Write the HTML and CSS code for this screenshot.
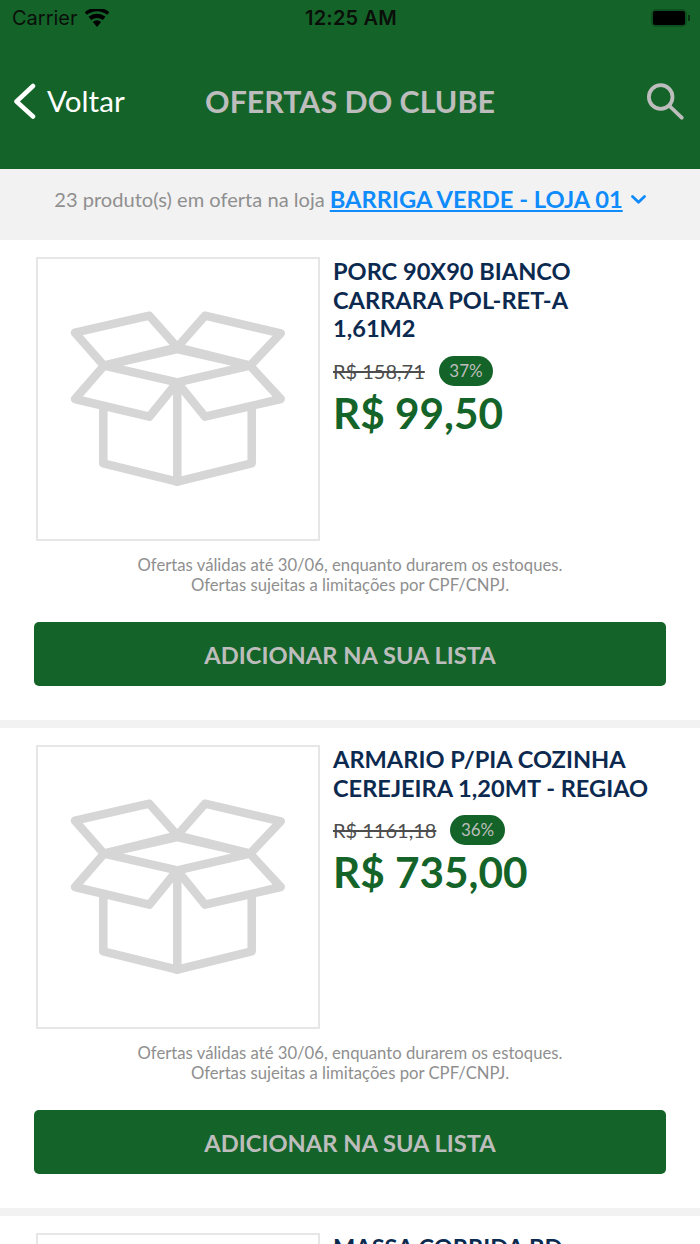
FILE: index.html
```html
<!DOCTYPE html>
<html lang="pt-br">
<head>
  <meta charset="UTF-8" />
  <title>Ofertas do Clube</title>
  <meta name="viewport" content="width=device-width, initial-scale=1" />
  <link rel="stylesheet" href="styles.css">
</head>
<body>
  <svg class="defs" width="0" height="0">
    <symbol id="caixa" viewBox="2 2 280 280">
      <g fill="none" stroke="#d6d6d6" stroke-width="8.5" stroke-linejoin="round" stroke-linecap="round">
        <path d="M39 75.7 113.3 58.7 141.3 90.3 68 108.7Z" />
        <path d="M244.7 76.3 169 58.7 141.3 90.3 214 108.7Z" />
        <path d="M68 108.7 141.3 92 214 108.7 141.3 125.3Z" />
        <path d="M68 108.7 39 142 113.3 159.7 141.3 125.3" />
        <path d="M214 108.7 244.7 142 169 159.7 141.3 125.3" />
        <path d="M67.3 150V206.3L141.3 224.7 215.7 206.3V150" />
        <path d="M141.3 125.3V224.7" />
      </g>
    </symbol>
  </svg>

  <header class="topo">
    <div class="status">
      <div class="status-esq">
        <span>Carrier</span>
        <svg class="wifi" viewBox="0 0 26 19"><path d="M13 19 8.6 13.6a7 7 0 0 1 8.8 0Z" /><path d="M6.9 11.6 4 8.2a14 14 0 0 1 18 0l-2.9 3.4a9.6 9.6 0 0 0-12.2 0Z" /><path d="M2.3 6.2 0 3.4a20.4 20.4 0 0 1 26 0l-2.3 2.8a16.8 16.8 0 0 0-21.4 0Z" /></svg>
      </div>
      <div class="hora">12:25 AM</div>
      <div class="status-dir">
        <div class="bateria"><div class="carga"></div></div>
        <div class="polo"></div>
      </div>
    </div>
    <nav class="nav">
      <a class="voltar" href="#">
        <svg class="seta" viewBox="0 0 22 36"><path d="M19 3 2.5 18.5 19 33.5" /></svg>
        <span>Voltar</span>
      </a>
      <h1>OFERTAS DO CLUBE</h1>
      <a class="busca" href="#">
        <svg viewBox="0 0 38 37"><circle cx="13.7" cy="14" r="11.8" /><path d="M22.5 23 34.7 34.7" /></svg>
      </a>
    </nav>
  </header>

  <div class="filtro">
    <span>23 produto(s) em oferta na loja</span>
    <a href="#">BARRIGA VERDE - LOJA 01</a>
    <svg class="chevron" viewBox="0 0 15 9"><path d="M1.5 1.5 7.5 7.2 13.5 1.5" /></svg>
  </div>

  <main>
    <article class="produto">
      <div class="linha">
        <div class="foto"><svg><use href="#caixa" /></svg></div>
        <div class="info">
          <h2>PORC 90X90 BIANCO CARRARA POL-RET-A 1,61M2</h2>
          <div class="de"><s>R$ 158,71</s><span class="desconto">37%</span></div>
          <div class="por">R$ 99,50</div>
        </div>
      </div>
      <p class="aviso">Ofertas válidas até 30/06, enquanto durarem os estoques.<br>Ofertas sujeitas a limitações por CPF/CNPJ.</p>
      <button type="button">ADICIONAR NA SUA LISTA</button>
    </article>

    <article class="produto">
      <div class="linha">
        <div class="foto"><svg><use href="#caixa" /></svg></div>
        <div class="info">
          <h2>ARMARIO P/PIA COZINHA CEREJEIRA 1,20MT - REGIAO</h2>
          <div class="de"><s>R$ 1161,18</s><span class="desconto">36%</span></div>
          <div class="por">R$ 735,00</div>
        </div>
      </div>
      <p class="aviso">Ofertas válidas até 30/06, enquanto durarem os estoques.<br>Ofertas sujeitas a limitações por CPF/CNPJ.</p>
      <button type="button">ADICIONAR NA SUA LISTA</button>
    </article>

    <article class="produto">
      <div class="linha">
        <div class="foto"><svg><use href="#caixa" /></svg></div>
        <div class="info">
          <h2>MASSA CORRIDA BD</h2>
        </div>
      </div>
    </article>
  </main>
</body>
</html>
```

FILE: styles.css
```css
html, body {
  height: 1244px;
  overflow: hidden;
}
body {
  margin: 0;
  font-family: 'Lato', sans-serif;
  background: white;
}
a {
  text-decoration: none;
}
.defs {
  display: block;
  height: 0;
}
.topo {
  background: #146429;
  height: 169px;
}
.status {
  display: grid;
  grid-template-columns: 1fr auto 1fr;
  align-items: center;
  height: 36px;
  padding: 0 10px 0 12px;
  font-family: 'Inter', sans-serif;
  font-size: 20px;
  color: #0a0f0a;
}
.status-esq {
  display: flex;
  align-items: center;
  gap: 6px;
}
.wifi {
  width: 26px;
  height: 18px;
  fill: #000;
  margin-top: -1px;
}
.status-dir {
  display: flex;
  justify-content: flex-end;
  align-items: center;
  gap: 1px;
}
.hora {
  font-weight: 600;
  letter-spacing: 0.2px;
}
.bateria {
  width: 36px;
  height: 18px;
  border: 2px solid #0e4f20;
  border-radius: 5px;
  box-sizing: border-box;
}
.carga {
  height: 100%;
  background: #000;
  border-radius: 2px;
}
.polo {
  width: 2px;
  height: 6px;
  background: #0b3316;
}
.nav {
  display: grid;
  grid-template-columns: 1fr auto 1fr;
  align-items: center;
  height: 66px;
  margin-top: 32px;
  padding: 0 14px;
}
.nav h1 {
  margin: 0;
  font-size: 30.4px;
  font-weight: 700;
  color: #bdbdbd;
}
.voltar {
  display: flex;
  align-items: center;
  gap: 11px;
  color: white;
  font-size: 29.6px;
}
.voltar span {
  margin-bottom: 2px;
}
.seta {
  width: 22px;
  height: 36px;
  fill: none;
  stroke: white;
  stroke-width: 4.5;
  stroke-linecap: round;
  stroke-linejoin: round;
}
.busca {
  justify-self: end;
  display: flex;
  margin-right: 1px;
}
.busca svg {
  width: 38px;
  height: 37px;
  fill: none;
  stroke: #bdbdbd;
  stroke-width: 3.8;
  stroke-linecap: round;
}
.filtro {
  display: flex;
  justify-content: center;
  align-items: center;
  gap: 5px;
  height: 71px;
  padding-bottom: 11px;
  box-sizing: border-box;
  background: #f2f2f2;
  color: #8f8f8f;
  font-size: 20.1px;
}
.filtro a {
  color: #0f8bfb;
  font-size: 23.7px;
  font-weight: 700;
  text-decoration: underline;
}
.chevron {
  width: 15px;
  height: 9px;
  margin-left: 3px;
  fill: none;
  stroke: #0f8bfb;
  stroke-width: 2.8;
  stroke-linecap: round;
  stroke-linejoin: round;
}
main {
  height: 1004px;
  overflow: hidden;
}
.produto {
  height: 488px;
  box-sizing: border-box;
  padding: 17px 34px 0;
  border-bottom: 8px solid #f2f2f2;
}
.produto:last-child {
  border-bottom: none;
}
.linha {
  display: flex;
  gap: 13px;
  padding-left: 2px;
}
.foto {
  width: 284px;
  height: 284px;
  flex: none;
  box-sizing: border-box;
  border: 2px solid #e6e6e6;
}
.foto svg {
  display: block;
  width: 280px;
  height: 280px;
}
.info {
  flex: 1;
  min-width: 0;
}
.info h2 {
  margin: 0 13px 0 0;
  font-size: 23.6px;
  line-height: 28.5px;
  font-weight: 700;
  color: #0c2a4f;
}
.de {
  display: flex;
  align-items: center;
  gap: 14px;
  margin-top: 13px;
  font-size: 20px;
  color: #4d4d4d;
}
.desconto {
  background: #146429;
  color: #bdbdbd;
  font-size: 17px;
  line-height: 30px;
  padding: 0 10.5px;
  border-radius: 15px;
}
.por {
  font-size: 42.3px;
  font-weight: 700;
  line-height: 54px;
  color: #146429;
}
.aviso {
  margin: 14px 0 0;
  text-align: center;
  color: #8f8f8f;
  font-size: 16.7px;
  line-height: 20px;
}
button {
  display: block;
  width: 100%;
  height: 64px;
  margin-top: 27px;
  padding: 2px 0 0;
  background: #146429;
  color: #bdbdbd;
  font-family: 'Lato', sans-serif;
  font-weight: 700;
  font-size: 23.7px;
  border: none;
  border-radius: 5px;
}
```
